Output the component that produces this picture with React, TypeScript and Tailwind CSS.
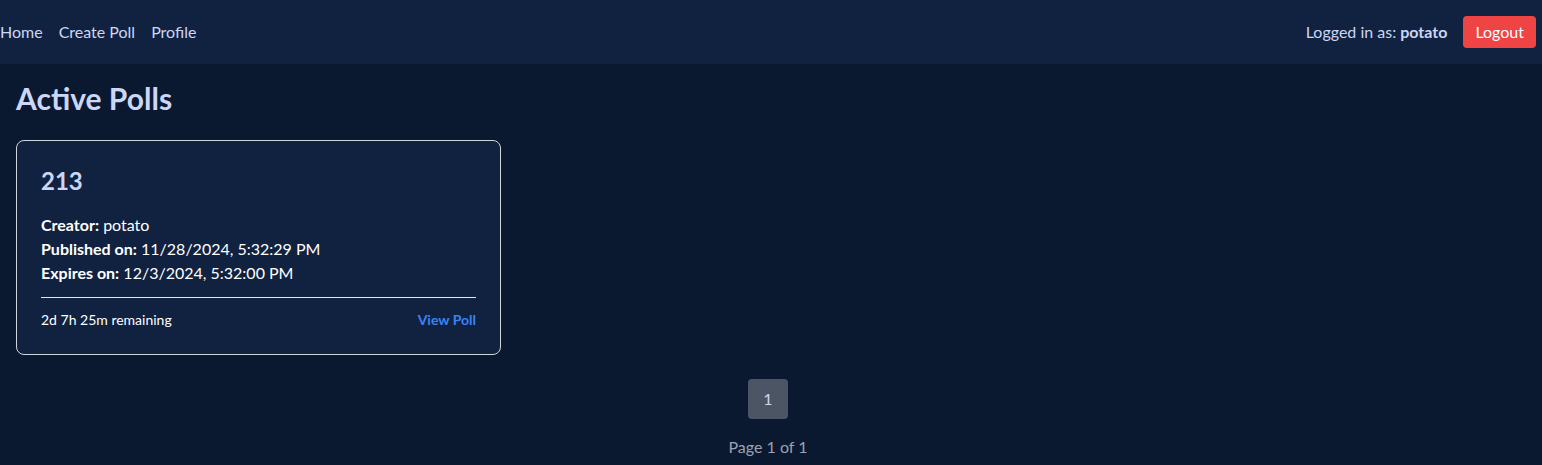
import React from "react";

const poll = {
  title: "213",
  creator: "potato",
  published: "11/28/2024, 5:32:29 PM",
  expires: "12/3/2024, 5:32:00 PM",
  remaining: "2d 7h 25m remaining",
};

const Navbar = () => (
  <nav className="flex h-16 items-center justify-between bg-[#112240] pr-[6px] text-[#ccd6f6]">
    <div className="flex items-center gap-4">
      <a href="#">Home</a>
      <a href="#">Create Poll</a>
      <a href="#">Profile</a>
    </div>
    <div className="flex items-center gap-4">
      <span>
        Logged in as: <span className="font-bold">potato</span>
      </span>
      <button className="rounded bg-[#ef4444] px-3 py-1 text-white">Logout</button>
    </div>
  </nav>
);

const PollCard = () => (
  <div className="w-[485px] rounded-lg border border-gray-300 bg-[#112240] p-6 text-white">
    <h2 className="mb-4 text-2xl font-bold text-[#ccd6f6]">{poll.title}</h2>
    <p>
      <span className="font-bold">Creator:</span> {poll.creator}
    </p>
    <p>
      <span className="font-bold">Published on:</span> {poll.published}
    </p>
    <p>
      <span className="font-bold">Expires on:</span> {poll.expires}
    </p>
    <div className="mt-3 flex items-center justify-between border-t border-gray-200 pt-3 text-sm">
      <span>{poll.remaining}</span>
      <a href="#" className="font-bold text-[#3b82f6]">
        View Poll
      </a>
    </div>
  </div>
);

export default function App() {
  return (
    <div
      className="min-h-[465px] bg-[#0a192f]"
      style={{ fontFamily: "Lato, 'Noto Sans', sans-serif" }}
    >
      <Navbar />
      <main className="p-4 pr-[22px]">
        <h1 className="mb-6 text-3xl font-bold text-[#ccd6f6]">Active Polls</h1>
        <div className="flex flex-wrap gap-6">
          <PollCard />
        </div>
        <div className="mt-6 flex justify-center">
          <button className="h-10 w-10 rounded bg-[#4b5563] text-[#ccd6f6]">1</button>
        </div>
        <p className="mt-4 text-center text-[#9ca3af]">Page 1 of 1</p>
      </main>
    </div>
  );
}
